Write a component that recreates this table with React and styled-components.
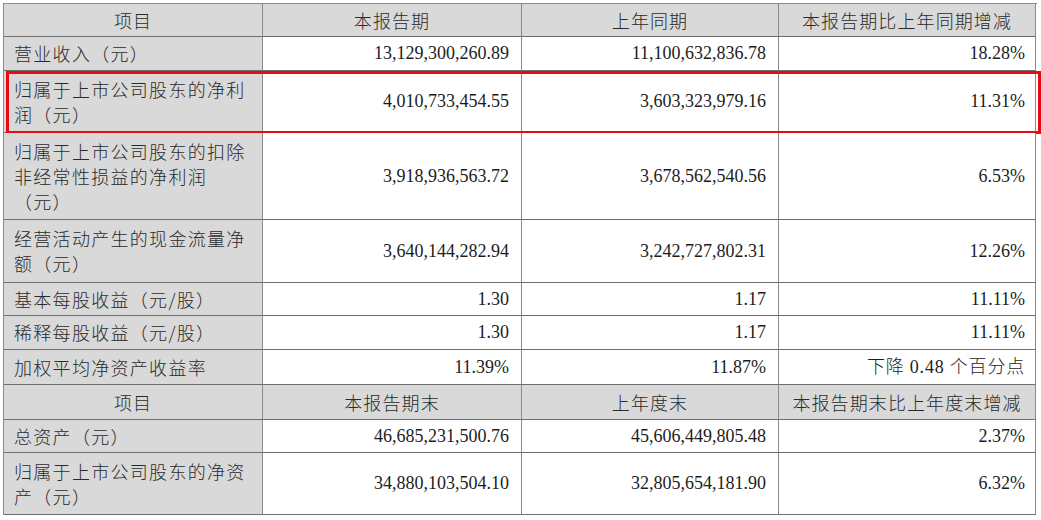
import styled, { createGlobalStyle } from "styled-components";

const GlobalStyle = createGlobalStyle`
  html, body {
    margin: 0;
    padding: 0;
    background: #ffffff;
  }
  body {
    font-family: "Liberation Serif", "Noto Sans CJK SC", serif;
    color: #1c1c1c;
  }
`;

const Page = styled.div`
  padding: 3px 0 0 3px;
`;

const Table = styled.div`
  width: 1033px;
  border-top: 1px solid #8a8a8a;
  border-left: 1px solid #8a8a8a;
`;

const Row = styled.div`
  position: relative;
  display: grid;
  grid-template-columns: 259px 259px 257px 257px;
  height: ${(p) => p.$h}px;
  ${(p) =>
    p.$marked &&
    `
    &::after {
      content: "";
      position: absolute;
      left: 2px;
      right: -4px;
      top: 0px;
      bottom: -1px;
      border: 3px solid #ea0a14;
      pointer-events: none;
    }
  `}
`;

const Cell = styled.div`
  display: flex;
  align-items: center;
  border-right: 1px solid #8a8a8a;
  border-bottom: 1px solid #6e6e6e;
  font-size: 18px;
  line-height: 25px;
  white-space: nowrap;
`;

const HeadCell = styled(Cell)`
  justify-content: center;
  background: #d9d9d9;
  font-family: "Noto Sans CJK SC", sans-serif;
  font-weight: 300;
  letter-spacing: 1.1px;
  color: #2a2a2a;
`;

const LabelCell = styled(Cell)`
  padding-left: 10px;
  background: #d9d9d9;
  font-family: "Noto Sans CJK SC", sans-serif;
  font-weight: 300;
  letter-spacing: 1.3px;
  color: #2a2a2a;
`;

const ValueCell = styled(Cell)`
  justify-content: flex-end;
  padding-right: ${(p) => (p.$last ? 10 : 12)}px;
  background: #ffffff;
`;

const Lines = styled.div`
  display: flex;
  flex-direction: column;
`;

const Mixed = styled.span`
  font-family: "Liberation Serif", "Noto Sans CJK SC", serif;
  font-weight: 300;
  letter-spacing: 0.8px;
`;

const rows = [
  { type: "head", h: 33, cells: ["项目", "本报告期", "上年同期", "本报告期比上年同期增减"] },
  { h: 34, label: ["营业收入（元）"], v: ["13,129,300,260.89", "11,100,632,836.78", "18.28%"] },
  { h: 62, marked: true, label: ["归属于上市公司股东的净利", "润（元）"], v: ["4,010,733,454.55", "3,603,323,979.16", "11.31%"] },
  { h: 87, label: ["归属于上市公司股东的扣除", "非经常性损益的净利润", "（元）"], v: ["3,918,936,563.72", "3,678,562,540.56", "6.53%"] },
  { h: 63, label: ["经营活动产生的现金流量净", "额（元）"], v: ["3,640,144,282.94", "3,242,727,802.31", "12.26%"] },
  { h: 33, label: ["基本每股收益（元/股）"], v: ["1.30", "1.17", "11.11%"] },
  { h: 34, label: ["稀释每股收益（元/股）"], v: ["1.30", "1.17", "11.11%"] },
  { h: 35, label: ["加权平均净资产收益率"], v: ["11.39%", "11.87%", <Mixed key="m">下降 0.48 个百分点</Mixed>] },
  { type: "head", h: 35, cells: ["项目", "本报告期末", "上年度末", "本报告期末比上年度末增减"] },
  { h: 33, label: ["总资产（元）"], v: ["46,685,231,500.76", "45,606,449,805.48", "2.37%"] },
  { h: 62, label: ["归属于上市公司股东的净资", "产（元）"], v: ["34,880,103,504.10", "32,805,654,181.90", "6.32%"] },
];

export default function App() {
  return (
    <Page>
      <GlobalStyle />
      <Table>
        {rows.map((r, i) =>
          r.type === "head" ? (
            <Row key={i} $h={r.h}>
              {r.cells.map((c) => (
                <HeadCell key={c}>{c}</HeadCell>
              ))}
            </Row>
          ) : (
            <Row key={i} $h={r.h} $marked={r.marked}>
              <LabelCell>
                <Lines>
                  {r.label.map((l) => (
                    <span key={l}>{l}</span>
                  ))}
                </Lines>
              </LabelCell>
              {r.v.map((v, j) => (
                <ValueCell key={j} $last={j === 2}>
                  {v}
                </ValueCell>
              ))}
            </Row>
          )
        )}
      </Table>
    </Page>
  );
}
